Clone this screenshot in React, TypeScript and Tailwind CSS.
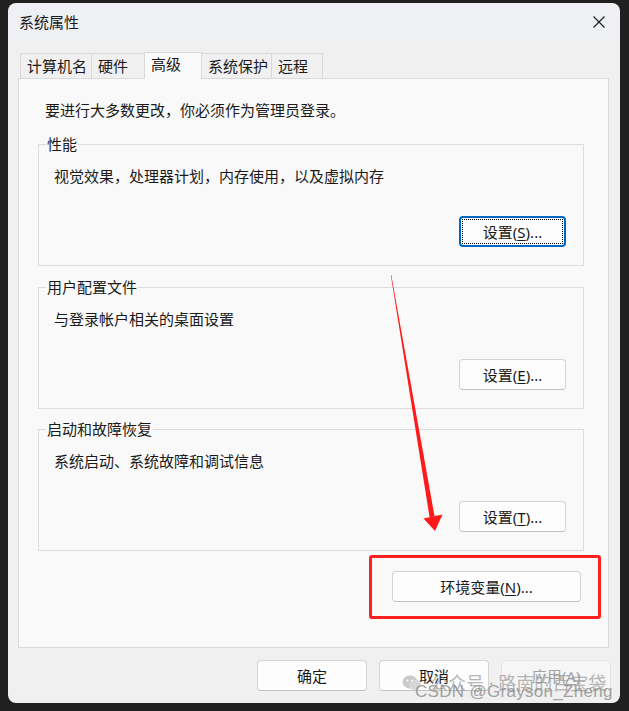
import React from 'react';

const tabs = [
  { label: '计算机名', w: 'w-[72px]', active: false },
  { label: '硬件', w: 'w-[54px]', active: false },
  { label: '高级', w: 'w-[58px]', active: true },
  { label: '系统保护', w: 'w-[71px]', active: false },
  { label: '远程', w: 'w-[52px]', active: false },
];

const groups = [
  { title: '性能', desc: '视觉效果，处理器计划，内存使用，以及虚拟内存', key: 'S', focus: true, mt: 'mt-[24px]' },
  { title: '用户配置文件', desc: '与登录帐户相关的桌面设置', key: 'E', focus: false, mt: 'mt-[21px]' },
  { title: '启动和故障恢复', desc: '系统启动、系统故障和调试信息', key: 'T', focus: false, mt: 'mt-[20px]' },
];

// ─── Win11 push button ────────────────────────────────────────────────────────
function WinButton({
  children, className = '', focus = false, disabled = false,
}: {
  children: React.ReactNode;
  className?: string;
  focus?: boolean;
  disabled?: boolean;
}) {
  return (
    <button
      className={
        'relative flex items-center justify-center h-[31px] rounded-[4px] text-[15px] leading-[20px] ' +
        (focus
          ? 'border-2 border-[#0067c0] bg-[#fdfdfd] text-[#1a1a1a] '
          : disabled
            ? 'border border-[#e3e3e3] bg-[#f6f6f6] text-[#a3a3a3] '
            : 'border border-[#d3d3d3] border-b-[#c2c2c2] bg-[#fdfdfd] text-[#1a1a1a] ') +
        className
      }
    >
      {focus && <span className="absolute inset-[1px] border border-dotted border-black" />}
      <span className="relative">{children}</span>
    </button>
  );
}

function Mnemonic({ label, k, tail = '' }: { label: string; k: string; tail?: string }) {
  return (
    <>
      {label}(<span className="underline underline-offset-2">{k}</span>){tail}
    </>
  );
}

export default function App() {
  return (
    <div className="relative w-[629px] h-[711px] bg-[#202020] overflow-hidden font-['Noto_Sans','Noto_Sans_CJK_SC',sans-serif] text-[#1a1a1a]">
      {/* Window */}
      <div className="ml-[8px] mt-[3px] w-[612px] h-[700px] rounded-[8px] overflow-hidden flex flex-col">
        {/* Title bar */}
        <div className="h-[37px] bg-[#eef0f4] flex items-center justify-between pl-[11px] pr-[15px]">
          <span className="text-[15px] leading-[20px]">系统属性</span>
          <svg width="12" height="12" viewBox="0 0 12 12" className="text-[#1a1a1a]">
            <path d="M0.5 0.5 L11.5 11.5 M11.5 0.5 L0.5 11.5" stroke="currentColor" strokeWidth="1.1" fill="none" />
          </svg>
        </div>

        {/* Body */}
        <div className="flex-1 bg-[#f0f0f0] pt-[12px] pl-[10px] pr-[11px] flex flex-col">
          {/* Tabs */}
          <div className="flex items-end h-[26px] ml-[2px]">
            {tabs.map((t, i) => (
              <div
                key={t.label}
                className={
                  'relative flex items-center pl-[6px] text-[15px] leading-[20px] border-t border-l border-r border-[#dadada] ' +
                  t.w + ' ' +
                  (i > 0 ? '-ml-px ' : '') +
                  (t.active
                    ? 'z-10 h-[27px] -mb-px pb-[4px] bg-[#f9f9f9]'
                    : 'h-[25px] bg-[#f0f0f0]')
                }
              >
                {t.label}
              </div>
            ))}
          </div>

          {/* Panel */}
          <div className="h-[570px] bg-[#f9f9f9] border border-[#dadada] pt-[21px] flex flex-col">
            <p className="ml-[26px] text-[15px] leading-[20px]">要进行大多数更改，你必须作为管理员登录。</p>

            {groups.map((g) => (
              <div
                key={g.title}
                className={'relative ml-[19px] w-[546px] h-[122px] border border-[#dcdcdc] pt-[21px] flex flex-col ' + g.mt}
              >
                <span className="absolute -top-[11px] left-[7px] px-[1px] bg-[#f9f9f9] text-[15px] leading-[20px]">
                  {g.title}
                </span>
                <p className="pl-[15px] text-[15px] leading-[20px]">{g.desc}</p>
                <WinButton focus={g.focus} className="self-end mr-[17px] mt-[30px] w-[107px]">
                  <Mnemonic label="设置" k={g.key} tail="..." />
                </WinButton>
              </div>
            ))}

            <WinButton className="self-end mr-[27px] mt-[20px] w-[189px]">
              <Mnemonic label="环境变量" k="N" tail="..." />
            </WinButton>
          </div>

          {/* Dialog buttons */}
          <div className="mt-[12px] flex justify-end gap-[12px] -mr-[2px]">
            <WinButton className="w-[110px]">确定</WinButton>
            <WinButton className="w-[110px]">取消</WinButton>
            <WinButton disabled className="w-[110px]">
              <Mnemonic label="应用" k="A" />
            </WinButton>
          </div>
        </div>
      </div>

      {/* Red annotation box */}
      <div className="absolute left-[369px] top-[555px] w-[232px] h-[64px] border-[3px] border-[#ff1f1f] rounded-[3px]" />

      {/* Red arrow */}
      <svg className="absolute inset-0 pointer-events-none" width="629" height="711" viewBox="0 0 629 711">
        <polygon points="390.8,275 391.3,275 434.6,516.6 429.6,517.4" fill="#ff1a1a" />
        <polygon points="423.5,518.5 442.5,514.5 435,531" fill="#ff1a1a" />
      </svg>

      {/* Watermarks */}
      <div className="absolute left-[402px] top-[672px] flex items-center gap-[4px] text-[18px] leading-[22px] text-[#9a9a9a] opacity-70">
        <svg width="20" height="18" viewBox="0 0 20 18">
          <ellipse cx="8" cy="8" rx="7.5" ry="6.5" fill="#b5b5b5" />
          <ellipse cx="13" cy="11" rx="6" ry="5" fill="#c8c8c8" />
          <circle cx="5.5" cy="6.5" r="1" fill="#fff" />
          <circle cx="10" cy="6.5" r="1" fill="#fff" />
        </svg>
        <span className="ml-[4px]">公众号 · 路南的百宝袋</span>
      </div>
      <span className="absolute left-[415px] top-[681px] text-[17px] leading-[22px] text-[#8d8d8d] opacity-80 font-['Liberation_Sans',sans-serif] tracking-[0.3px]">
        CSDN @Grayson_Zheng
      </span>
    </div>
  );
}
